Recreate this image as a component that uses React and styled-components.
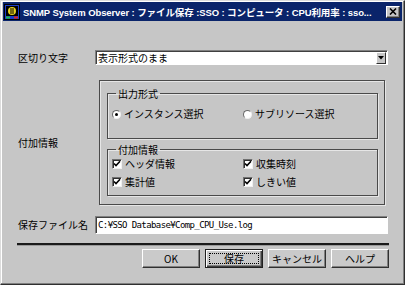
import React from "react";
import styled, { createGlobalStyle } from "styled-components";

const GlobalStyle = createGlobalStyle`
  html, body {
    margin: 0;
    padding: 0;
    background: #c6c6c6;
  }
  body {
    width: 405px;
    height: 285px;
    overflow: hidden;
    font-family: "Noto Sans CJK JP", "Liberation Sans", sans-serif;
    font-size: 10px;
    color: #000;
  }
`;

const Window = styled.div`
  box-sizing: border-box;
  width: 405px;
  height: 285px;
  background: #c6c6c6;
  border-top: 1px solid #dcdcdc;
  border-left: 1px solid #dcdcdc;
  border-right: 1px solid #303030;
  border-bottom: 1px solid #303030;
  box-shadow: inset -1px -1px 0 #808080, inset 1px 1px 0 #fff;
  padding: 1px 2px 0 2px;
  display: flex;
  flex-direction: column;
`;

const TitleBar = styled.div`
  height: 19px;
  background: #0a246a;
  display: flex;
  align-items: center;
  padding: 0 2px 0 1px;
  gap: 3px;
  color: #fff;
`;

const TitleText = styled.div`
  flex: 1;
  white-space: nowrap;
  overflow: hidden;
  font-family: "Liberation Sans", "Noto Sans CJK JP", sans-serif;
  font-weight: bold;
  font-size: 9.5px;
  letter-spacing: -0.1px;
`;

const CloseBtn = styled.div`
  width: 14px;
  height: 12px;
  box-sizing: border-box;
  background: #c6c6c6;
  border: 1px solid;
  border-color: #fff #303030 #303030 #fff;
  box-shadow: inset -1px -1px 0 #808080;
  display: flex;
  align-items: center;
  justify-content: center;
`;

const Body = styled.div`
  display: grid;
  grid-template-columns: 77px 1fr;
  align-items: center;
  padding: 29px 14px 0 15px;
`;

const Label = styled.div`
  white-space: nowrap;
  line-height: 12px;
  margin-top: ${(p) => p.$top || 0}px;
`;

const Combo = styled.div`
  height: 15px;
  box-sizing: border-box;
  background: #fff;
  border: 1px solid;
  border-color: #808080 #fff #fff #808080;
  box-shadow: inset 1px 1px 0 #404040;
  display: flex;
  align-items: center;
  padding: 1px 1px 1px 2px;
`;

const ComboText = styled.span`
  flex: 1;
  line-height: 12px;
`;

const ArrowBtn = styled.div`
  width: 10px;
  height: 12px;
  box-sizing: border-box;
  background: #c6c6c6;
  border: 1px solid;
  border-color: #fff #303030 #303030 #fff;
  display: flex;
  align-items: center;
  justify-content: center;
`;

const OuterGroup = styled.div`
  margin: 15px 3px 0 4px;
  height: 125px;
  box-sizing: border-box;
  border: 1px solid #4a4a4a;
  box-shadow: 1px 1px 0 #e6e6e6, inset 1px 1px 0 #e6e6e6;
  padding: 7px 6px 0 7px;
  display: flex;
  flex-direction: column;
  gap: 5px;
`;

const Group = styled.fieldset`
  margin: 0;
  padding: 0 0 0 4px;
  border: 1px solid #4a4a4a;
  box-shadow: 1px 1px 0 #e6e6e6, inset 1px 1px 0 #e6e6e6;
  height: ${(p) => p.$h}px;
  box-sizing: border-box;
  min-width: 0;
`;

const Legend = styled.legend`
  margin-left: 4px;
  padding: 0 2px;
  line-height: 11px;
`;

const Options = styled.div`
  display: grid;
  grid-template-columns: 131px 1fr;
  row-gap: 6px;
  margin-top: ${(p) => p.$top}px;
`;

const Option = styled.label`
  display: flex;
  align-items: center;
  gap: 3px;
  line-height: 12px;
  white-space: nowrap;
`;

const Radio = styled.span`
  width: 9px;
  height: 9px;
  box-sizing: border-box;
  border-radius: 50%;
  background: #fff;
  border: 1px solid;
  border-color: #6a6a6a #f0f0f0 #f0f0f0 #6a6a6a;
  display: flex;
  align-items: center;
  justify-content: center;
  &::after {
    content: "";
    width: 3px;
    height: 3px;
    border-radius: 50%;
    background: ${(p) => (p.$checked ? "#000" : "transparent")};
  }
`;

const Check = styled.span`
  width: 10px;
  height: 10px;
  box-sizing: border-box;
  background: #fff;
  border: 1px solid;
  border-color: #707070 #f0f0f0 #f0f0f0 #707070;
  box-shadow: inset 1px 1px 0 #303030;
  display: flex;
  align-items: center;
  justify-content: center;
`;

const PathInput = styled.div`
  margin-top: 11px;
  height: 18px;
  box-sizing: border-box;
  background: #fff;
  border: 1px solid;
  border-color: #808080 #fff #fff #808080;
  box-shadow: inset 1px 1px 0 #404040;
  padding: 0 2px;
  display: flex;
  align-items: center;
  font-family: "DejaVu Sans Mono", "Liberation Mono", monospace;
  font-size: 9px;
  letter-spacing: -0.6px;
  white-space: nowrap;
`;

const Separator = styled.div`
  grid-column: 1 / -1;
  margin: 9px -1px 0 -1px;
  height: 2px;
  background: #1a1a1a;
  box-shadow: 0 1px 0 #9a9a9a;
`;

const ButtonRow = styled.div`
  grid-column: 1 / -1;
  display: flex;
  justify-content: flex-end;
  gap: 5px;
  margin: 4px -1px 0 0;
`;

const Button = styled.div`
  width: 58px;
  height: 19px;
  box-sizing: border-box;
  background: #cacaca;
  border: 1px solid;
  border-color: ${(p) => (p.$default ? "#202020" : "#fff #303030 #303030 #fff")};
  box-shadow: ${(p) =>
    p.$default
      ? "inset 1px 1px 0 #fff, inset -1px -1px 0 #404040, inset -2px -2px 0 #808080"
      : "inset -1px -1px 0 #808080"};
  display: flex;
  align-items: center;
  justify-content: center;
  position: relative;
  line-height: 12px;
  font-size: 10px;
  &::after {
    content: "";
    display: ${(p) => (p.$default ? "block" : "none")};
    position: absolute;
    inset: 3px;
    border: 1px dotted #000;
  }
`;

const AppIcon = () => (
  <svg width="16" height="16" viewBox="0 0 16 16">
    <rect x="0.5" y="0.5" width="15" height="15" fill="#1c3cc8" stroke="#000" />
    <rect x="2" y="2" width="12" height="10" fill="#000" />
    <circle cx="8" cy="7" r="4" fill="#e8d020" />
    <path d="M6 5 h4 M6 7 h4 M6 9 h4" stroke="#000" strokeWidth="1" />
    <rect x="2" y="12.5" width="4" height="2" fill="#20c040" />
    <rect x="10" y="12.5" width="4" height="2" fill="#e02020" />
  </svg>
);

const CheckMark = () => (
  <svg width="8" height="8" viewBox="0 0 8 8">
    <path d="M1 3.5 L3 5.5 L7 1.2" stroke="#000" strokeWidth="1.6" fill="none" />
  </svg>
);

const CheckOption = ({ children }) => (
  <Option>
    <Check>
      <CheckMark />
    </Check>
    {children}
  </Option>
);

const App = () => {
  return (
    <>
      <GlobalStyle />
      <Window>
        <TitleBar>
          <AppIcon />
          <TitleText>
            SNMP System Observer : ファイル保存 :SSO : コンピュータ : CPU利用率 : sso...
          </TitleText>
          <CloseBtn>
            <svg width="8" height="7" viewBox="0 0 8 7">
              <path d="M1 0.5 L7 6.5 M7 0.5 L1 6.5" stroke="#000" strokeWidth="1.6" />
            </svg>
          </CloseBtn>
        </TitleBar>

        <Body>
          <Label>区切り文字</Label>
          <Combo>
            <ComboText>表示形式のまま</ComboText>
            <ArrowBtn>
              <svg width="6" height="4" viewBox="0 0 6 4">
                <path d="M0 0 H6 L3 3.5 Z" fill="#000" />
              </svg>
            </ArrowBtn>
          </Combo>

          <Label $top={15}>付加情報</Label>
          <OuterGroup>
            <Group $h={51}>
              <Legend>出力形式</Legend>
              <Options $top={9}>
                <Option>
                  <Radio $checked />
                  インスタンス選択
                </Option>
                <Option>
                  <Radio />
                  サブリソース選択
                </Option>
              </Options>
            </Group>
            <Group $h={52}>
              <Legend>付加情報</Legend>
              <Options $top={3}>
                <CheckOption>ヘッダ情報</CheckOption>
                <CheckOption>収集時刻</CheckOption>
                <CheckOption>集計値</CheckOption>
                <CheckOption>しきい値</CheckOption>
              </Options>
            </Group>
          </OuterGroup>

          <Label $top={11}>保存ファイル名</Label>
          <PathInput>C:¥SSO Database¥Comp_CPU_Use.log</PathInput>

          <Separator />
          <ButtonRow>
            <Button>OK</Button>
            <Button $default>保存</Button>
            <Button>キャンセル</Button>
            <Button>ヘルプ</Button>
          </ButtonRow>
        </Body>
      </Window>
    </>
  );
};

export default App;
